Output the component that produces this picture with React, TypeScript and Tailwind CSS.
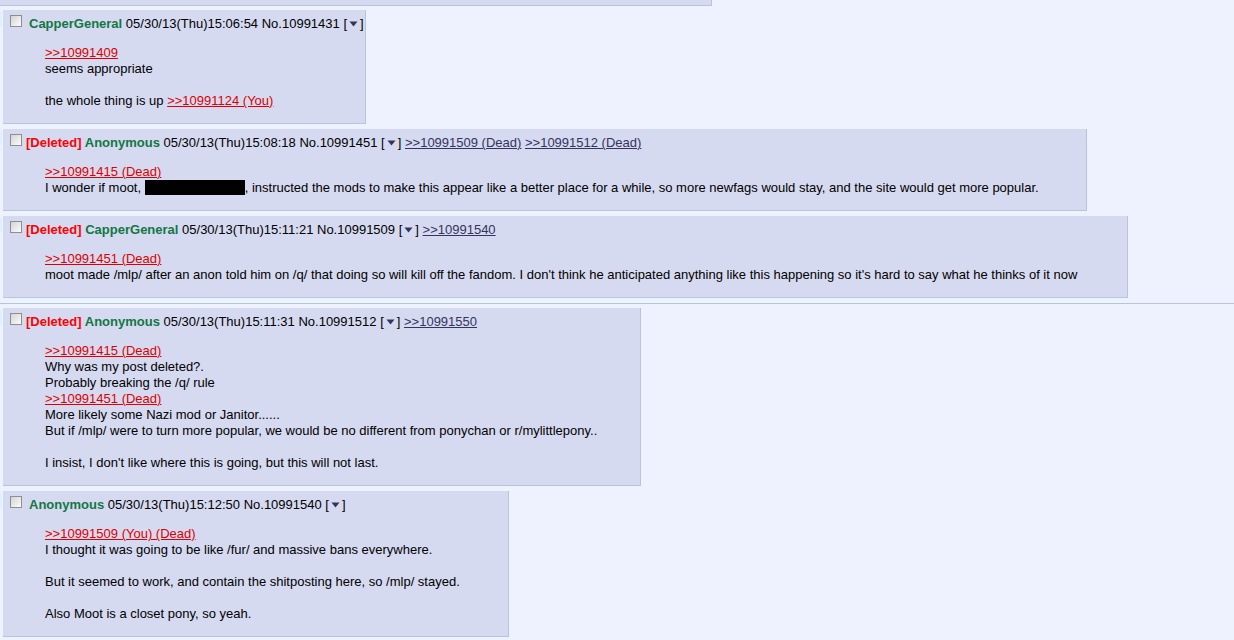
import type { ReactNode } from 'react';

type PostProps = {
  width: string;
  deleted?: boolean;
  name: string;
  date: string;
  no: string;
  backlinks?: string[];
  lines: ReactNode[];
};

function Checkbox() {
  return (
    <span className="inline-block w-[12px] h-[12px] shrink-0 border border-[#8e8e8e] bg-linear-to-br from-[#d4d4d4] to-[#fcfcfc]" />
  );
}

function MenuButton() {
  return (
    <span className="text-black">
      [
      <svg className="inline-block mx-[2px] align-[1px]" width="9" height="6" viewBox="0 0 9 6">
        <polygon points="0.5,0.5 8.5,0.5 4.5,5.5" fill="#34345c" />
      </svg>
      ]
    </span>
  );
}

function Quote({ children }: { children: ReactNode }) {
  return <span className="text-[#d00] underline">{children}</span>;
}

function Post({ width, deleted, name, date, no, backlinks = [], lines }: PostProps) {
  return (
    <div className="flex">
      {/* clipped side arrows */}
      <div className="w-[3px] shrink-0 pt-[2px]">
        <div className="w-[2px] h-[14px] bg-[#dcf1fb]" />
      </div>
      <div className={`${width} bg-[#d6daf0] border-r border-b border-[#b7c5d9] pb-[14px]`}>
        <div className="flex items-start pt-[5px] pl-[7px] h-[21px] whitespace-nowrap">
          <Checkbox />
          <span className={`pt-[1px] ${deleted ? 'ml-[4px]' : 'ml-[7px]'}`}>
            {deleted && <span className="text-[#f00] font-bold">[Deleted] </span>}
            <span className="text-[#117743] font-bold">{name}</span> {date} No.{no} <MenuButton />
            {backlinks.map((b) => (
              <span key={b}>
                {' '}
                <span className="text-[#34345c] underline">{b}</span>
              </span>
            ))}
          </span>
        </div>
        <div className="mt-[14px] ml-[42px] whitespace-nowrap">
          {lines.map((l, i) => (
            <div key={i} className="h-[16px]">
              {l}
            </div>
          ))}
        </div>
      </div>
    </div>
  );
}

export default function App() {
  return (
    <div className="min-h-screen bg-[#eef2ff] text-black text-[13px] leading-[16px] font-['Liberation_Sans',Arial,sans-serif] overflow-hidden">
      {/* end of previous post */}
      <div className="w-[712px] h-[6px] bg-[#d6daf0] border-r border-b border-[#b7c5d9]" />

      <div className="flex flex-col gap-[5px] pt-[4px]">
        <Post
          width="w-[363px]"
          name="CapperGeneral"
          date="05/30/13(Thu)15:06:54"
          no="10991431"
          lines={[
            <Quote>&gt;&gt;10991409</Quote>,
            'seems appropriate',
            '',
            <>
              the whole thing is up <Quote>&gt;&gt;10991124 (You)</Quote>
            </>,
          ]}
        />
        <Post
          width="w-[1084px]"
          deleted
          name="Anonymous"
          date="05/30/13(Thu)15:08:18"
          no="10991451"
          backlinks={['>>10991509 (Dead)', '>>10991512 (Dead)']}
          lines={[
            <Quote>&gt;&gt;10991415 (Dead)</Quote>,
            <>
              I wonder if moot,{' '}
              <span className="inline-block w-[100px] h-[15px] bg-black align-[-3px]" />, instructed the mods to make
              this appear like a better place for a while, so more newfags would stay, and the site would get more
              popular.
            </>,
          ]}
        />
        <Post
          width="w-[1125px]"
          deleted
          name="CapperGeneral"
          date="05/30/13(Thu)15:11:21"
          no="10991509"
          backlinks={['>>10991540']}
          lines={[
            <Quote>&gt;&gt;10991451 (Dead)</Quote>,
            "moot made /mlp/ after an anon told him on /q/ that doing so will kill off the fandom. I don't think he anticipated anything like this happening so it's hard to say what he thinks of it now",
          ]}
        />

        <div className="h-[1px] bg-[#b7c5d9] -mb-[1px]" />

        <Post
          width="w-[638px]"
          deleted
          name="Anonymous"
          date="05/30/13(Thu)15:11:31"
          no="10991512"
          backlinks={['>>10991550']}
          lines={[
            <Quote>&gt;&gt;10991415 (Dead)</Quote>,
            'Why was my post deleted?.',
            'Probably breaking the /q/ rule',
            <Quote>&gt;&gt;10991451 (Dead)</Quote>,
            'More likely some Nazi mod or Janitor......',
            'But if /mlp/ were to turn more popular, we would be no different from ponychan or r/mylittlepony..',
            '',
            "I insist, I don't like where this is going, but this will not last.",
          ]}
        />
        <Post
          width="w-[506px]"
          name="Anonymous"
          date="05/30/13(Thu)15:12:50"
          no="10991540"
          lines={[
            <Quote>&gt;&gt;10991509 (You) (Dead)</Quote>,
            'I thought it was going to be like /fur/ and massive bans everywhere.',
            '',
            'But it seemed to work, and contain the shitposting here, so /mlp/ stayed.',
            '',
            'Also Moot is a closet pony, so yeah.',
          ]}
        />
      </div>
    </div>
  );
}
